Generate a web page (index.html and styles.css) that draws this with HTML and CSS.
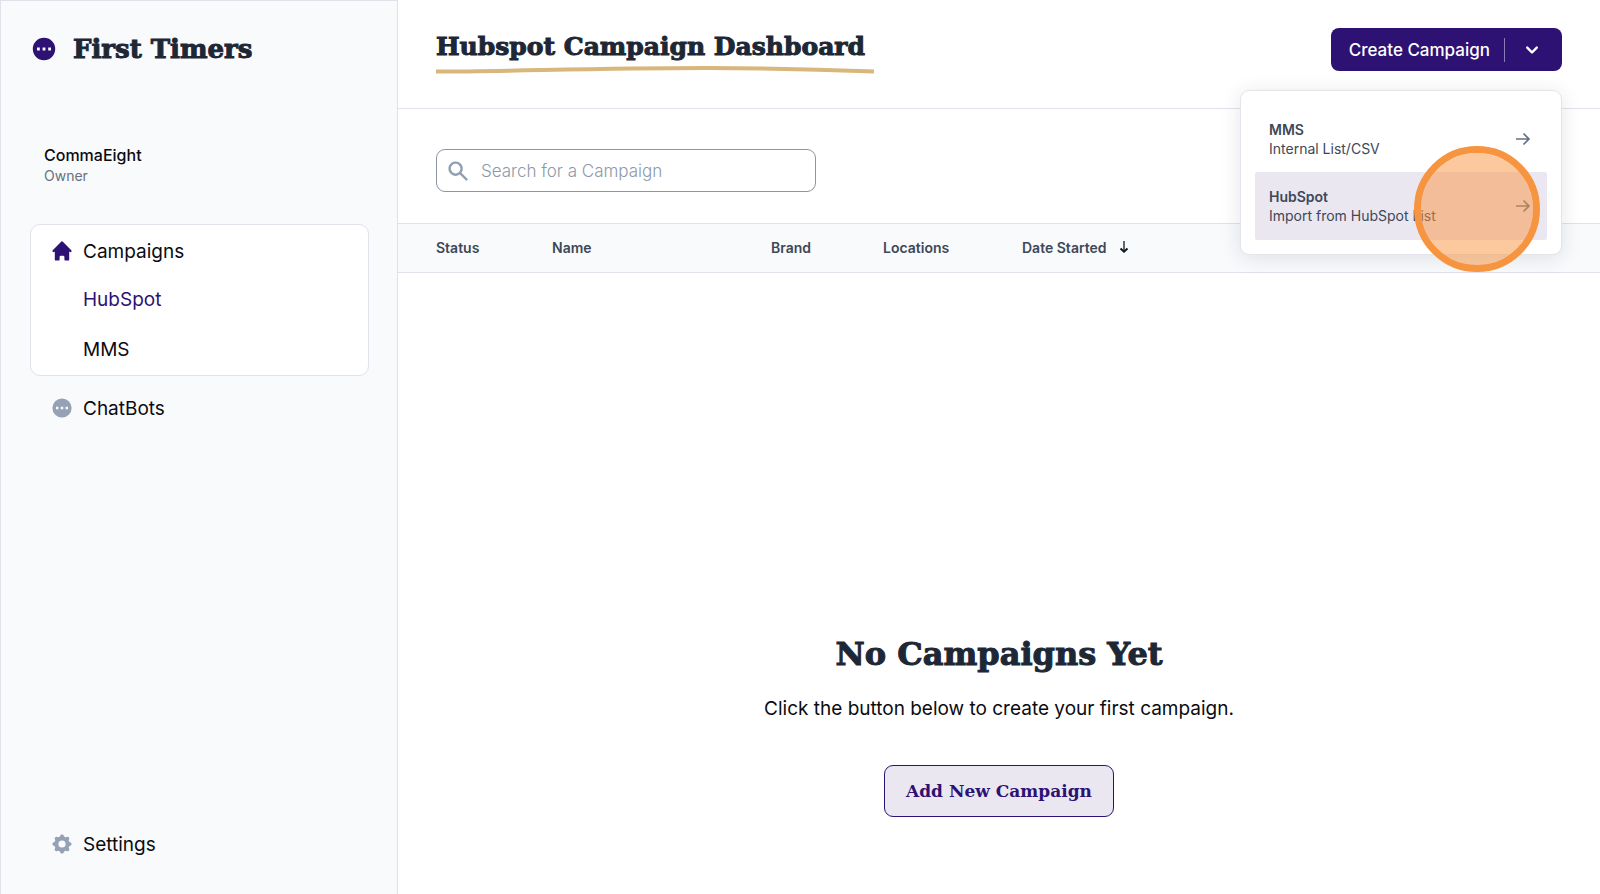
FILE: index.html
```html
<!DOCTYPE html>
<html lang="en">
<head>
<meta charset="utf-8">
<meta name="viewport" content="width=device-width, initial-scale=1">
<title>Hubspot Campaign Dashboard</title>
<link rel="stylesheet" href="styles.css">
</head>
<body>
<div class="app">
  <aside class="sidebar">
    <div class="brand">
      <svg class="brand-icon" viewBox="0 0 20 20" aria-hidden="true"><path fill-rule="evenodd" d="M18 10a8 8 0 11-16 0 8 8 0 0116 0zM7 9H5v2h2V9zm8 0h-2v2h2V9zM9 9h2v2H9V9z"/></svg>
      <span class="brand-name">First Timers</span>
    </div>
    <div class="account">
      <div class="account-name">CommaEight</div>
      <div class="account-role">Owner</div>
    </div>
    <nav class="nav">
      <div class="nav-group">
        <a class="nav-link" href="#campaigns"><svg class="nav-icon nav-icon-active" viewBox="0 0 20 20" aria-hidden="true"><path d="M10.707 2.293a1 1 0 00-1.414 0l-7 7a1 1 0 001.414 1.414L4 10.414V17a1 1 0 001 1h2a1 1 0 001-1v-2a1 1 0 011-1h2a1 1 0 011 1v2a1 1 0 001 1h2a1 1 0 001-1v-6.586l.293.293a1 1 0 001.414-1.414l-7-7z"/></svg>Campaigns</a>
        <a class="nav-link nav-sub nav-current" href="#hubspot">HubSpot</a>
        <a class="nav-link nav-sub" href="#mms">MMS</a>
      </div>
      <a class="nav-link nav-single" href="#chatbots"><svg class="nav-icon" viewBox="0 0 20 20" aria-hidden="true"><path fill-rule="evenodd" d="M18 10a8 8 0 11-16 0 8 8 0 0116 0zM7 9H5v2h2V9zm8 0h-2v2h2V9zM9 9h2v2H9V9z"/></svg>ChatBots</a>
      <a class="nav-link nav-single nav-settings" href="#settings"><svg class="nav-icon" viewBox="0 0 20 20" aria-hidden="true"><path fill-rule="evenodd" d="M11.49 3.17c-.38-1.56-2.6-1.56-2.98 0a1.532 1.532 0 01-2.286.948c-1.372-.836-2.942.734-2.106 2.106.54.886.061 2.042-.947 2.287-1.561.379-1.561 2.6 0 2.978a1.532 1.532 0 01.947 2.287c-.836 1.372.734 2.942 2.106 2.106a1.532 1.532 0 012.287.947c.379 1.561 2.6 1.561 2.978 0a1.533 1.533 0 012.287-.947c1.372.836 2.942-.734 2.106-2.106a1.533 1.533 0 01.947-2.287c1.561-.379 1.561-2.6 0-2.978a1.532 1.532 0 01-.947-2.287c.836-1.372-.734-2.942-2.106-2.106a1.532 1.532 0 01-2.287-.947zM10 13a3 3 0 100-6 3 3 0 000 6z"/></svg>Settings</a>
    </nav>
  </aside>

  <main class="main">
    <header class="header">
      <div class="title">
        <h1 class="title-text">Hubspot Campaign Dashboard</h1>
        <svg class="title-line" viewBox="0 0 438 8" preserveAspectRatio="none" aria-hidden="true"><path d="M0 5.500C80 5.500 150 2 270 2C340 2 390 3.500 438 5.500"/></svg>
      </div>
      <div class="create">
        <div class="split">
          <button class="split-main" type="button">Create Campaign</button>
          <button class="split-toggle" type="button" aria-label="Campaign types" aria-expanded="true"><svg class="chevron" viewBox="0 0 20 20" aria-hidden="true"><path fill-rule="evenodd" d="M5.293 7.293a1 1 0 011.414 0L10 10.586l3.293-3.293a1 1 0 111.414 1.414l-4 4a1 1 0 01-1.414 0l-4-4a1 1 0 010-1.414z"/></svg></button>
        </div>
        <div class="menu">
          <button class="menu-item" type="button">
            <span class="menu-copy"><span class="menu-title">MMS</span><span>Internal List/CSV</span></span>
            <svg class="arrow" viewBox="0 0 16 16" aria-hidden="true"><path d="M1 8h13M8.500 2.500L14 8l-5.500 5.500"/></svg>
          </button>
          <button class="menu-item menu-item-hover" type="button">
            <span class="menu-copy"><span class="menu-title">HubSpot</span><span>Import from HubSpot List</span></span>
            <svg class="arrow" viewBox="0 0 16 16" aria-hidden="true"><path d="M1 8h13M8.500 2.500L14 8l-5.500 5.500"/></svg>
            <span class="click-marker"></span>
          </button>
        </div>
      </div>
    </header>

    <div class="toolbar">
      <label class="search">
        <svg class="search-icon" viewBox="0 0 20 20" aria-hidden="true"><path fill-rule="evenodd" d="M8 4a4 4 0 100 8 4 4 0 000-8zM2 8a6 6 0 1110.890 3.476l4.817 4.817a1 1 0 01-1.414 1.414l-4.816-4.816A6 6 0 012 8z"/></svg>
        <input class="search-input" type="text" placeholder="Search for a Campaign" aria-label="Search for a Campaign">
      </label>
    </div>

    <table class="table">
      <thead>
        <tr>
          <th class="col-status">Status</th>
          <th class="col-name">Name</th>
          <th class="col-brand">Brand</th>
          <th class="col-locations">Locations</th>
          <th>
            <span class="sort">Date Started
              <svg class="sort-icon" viewBox="0 0 10 14" aria-hidden="true"><path class="sort-stem" d="M5 1v10"/><path class="sort-head" d="M1.500 8.500L5 11.700l3.500-3.200"/></svg>
            </span>
          </th>
        </tr>
      </thead>
    </table>

    <section class="empty">
      <h2 class="empty-title">No Campaigns Yet</h2>
      <p class="empty-text">Click the button below to create your first campaign.</p>
      <button class="add" type="button">Add New Campaign</button>
    </section>
  </main>
</div>
</body>
</html>
```

FILE: styles.css
```css
:root {
  --sans: Inter, "Liberation Sans", sans-serif;
  --display: "DejaVu Serif", serif;
  --purple: #2d1173;
  --ink: #1d2735;
  --slate: #3d4858;
  --line: #dfe3e9;
  --pale: #f8fafc;
}

* { box-sizing: border-box; }

body {
  margin: 0;
  font-family: var(--sans);
  color: #0b0b10;
  background: #fff;
}

button, input { font-family: inherit; }
button { cursor: pointer; }

.app {
  display: flex;
  min-height: 100vh;
}

/* Sidebar */
.sidebar {
  flex: none;
  display: flex;
  flex-direction: column;
  width: 398px;
  padding: 28px 28px 32px 29px;
  background: var(--pale);
  border: 1px solid var(--line);
  border-bottom: 0;
}

.brand {
  display: flex;
  align-items: center;
  gap: 15px;
  height: 40px;
}

.brand-icon {
  width: 28px;
  height: 28px;
  fill: var(--purple);
}

.brand-name {
  font: bold 26px/40px var(--display);
  color: var(--ink);
}

.brand-name, .title-text, .empty-title { -webkit-text-stroke: 1px var(--ink); }

.account { padding: 74px 14px 0; }

.account-name {
  font-size: 16px;
  font-weight: 500;
  line-height: 24px;
}

.account-role {
  font-size: 14px;
  line-height: 18px;
  color: #667180;
}

.nav {
  flex: 1;
  display: flex;
  flex-direction: column;
  margin-top: 39px;
}

.nav-group {
  display: flex;
  flex-direction: column;
  background: #fff;
  border: 1px solid var(--line);
  border-radius: 10px;
}

.nav-link {
  display: flex;
  align-items: center;
  gap: 9px;
  height: 52px;
  padding: 0 19px;
  font-size: 19px;
  color: #0b0b10;
  text-decoration: none;
}

.nav-sub {
  height: 44px;
  padding: 0 52px;
}

.nav-sub:last-child {
  height: 52px;
  margin-top: 2px;
}

.nav-current { color: var(--purple); }

.nav-single {
  padding: 0 20px;
  margin-top: 6px;
}

.nav-settings { margin-top: auto; margin-bottom: -8px; }

.nav-icon {
  width: 24px;
  height: 24px;
  fill: #95a2b5;
}

.nav-icon-active { fill: var(--purple); }

/* Header */
.main {
  flex: 1;
  display: flex;
  flex-direction: column;
  min-width: 0;
}

.header {
  display: flex;
  justify-content: space-between;
  align-items: flex-start;
  height: 109px;
  padding: 28px 38px 0;
  border-bottom: 1px solid var(--line);
}

.title-text {
  margin: 0;
  font: bold 25px/38px var(--display);
  color: var(--ink);
}

.title-line {
  display: block;
  width: 438px;
  height: 8px;
  fill: none;
  stroke: #d9b679;
  stroke-width: 4;
}

.create { position: relative; }

.split {
  display: flex;
  align-items: center;
  height: 43px;
  background: var(--purple);
  border-radius: 8px;
}

.split-main, .split-toggle {
  display: flex;
  align-items: center;
  justify-content: center;
  height: 24px;
  padding: 0;
  border: 0;
  background: none;
  color: #fff;
}

.split-main {
  padding: 0 14px 0 18px;
  font-size: 17px;
  font-weight: 500;
}

.split-toggle {
  width: 58px;
  padding-right: 4px;
  border-left: 1px solid #8b7bb3;
}

.chevron {
  width: 24px;
  height: 24px;
  fill: #fff;
}

.menu {
  position: absolute;
  top: 62px;
  right: 0;
  width: 322px;
  padding: 14px;
  background: #fff;
  border: 1px solid #e3e5ea;
  border-radius: 9px;
  box-shadow: 0 3px 20px rgba(30, 40, 60, 0.12);
}

.menu-item {
  position: relative;
  display: flex;
  align-items: center;
  justify-content: space-between;
  width: 100%;
  height: 67px;
  padding: 0 16px 0 14px;
  border: 0;
  border-radius: 2px;
  background: none;
  font-size: 14px;
  line-height: 19px;
  text-align: left;
  color: var(--slate);
}

.menu-item-hover {
  height: 68px;
  background: #eae7f1;
}

.menu-copy {
  display: flex;
  flex-direction: column;
}

.menu-title { font-weight: 600; }

.arrow {
  width: 16px;
  height: 16px;
  fill: none;
  stroke: #667085;
  stroke-width: 1.700;
}

.click-marker {
  position: absolute;
  top: -26px;
  right: 7px;
  width: 126px;
  height: 126px;
  border: 7px solid #f79440;
  border-radius: 50%;
  background: rgba(249, 148, 64, 0.5);
  background-clip: padding-box;
}

/* Search */
.toolbar { padding: 40px 38px 31px; }

.search {
  display: flex;
  align-items: center;
  gap: 11px;
  width: 380px;
  height: 43px;
  padding: 0 9px;
  border: 1px solid #8b95a3;
  border-radius: 9px;
}

.search-icon {
  width: 24px;
  height: 24px;
  fill: #93a0b0;
}

.search-input {
  flex: 1;
  min-width: 0;
  padding: 0;
  border: 0;
  outline: 0;
  background: none;
  font-size: 17px;
  font-weight: 300;
}

.search-input::placeholder { color: #8d99a9; opacity: 1; }

/* Table */
.table {
  width: 100%;
  table-layout: fixed;
  border-spacing: 0;
  background: var(--pale);
  border-top: 1px solid var(--line);
  border-bottom: 1px solid var(--line);
}

.table th {
  height: 48px;
  padding: 0 0 2px;
  font-size: 14px;
  font-weight: 600;
  text-align: left;
  color: var(--slate);
}

.table .col-status { width: 154px; padding-left: 38px; }
.col-name { width: 219px; }
.col-brand { width: 112px; }
.col-locations { width: 139px; }

.sort {
  display: flex;
  align-items: center;
  gap: 12px;
}

.sort-icon {
  width: 10px;
  height: 14px;
  fill: none;
  stroke: #111820;
}

.sort-stem { stroke-width: 1.300; }
.sort-head { stroke-width: 2; }

/* Empty state */
.empty {
  flex: 1;
  display: flex;
  flex-direction: column;
  align-items: center;
  justify-content: flex-end;
  padding: 40px 38px 77px;
}

.empty-title {
  margin: 0;
  font: bold 32px/48px var(--display);
  color: var(--ink);
}

.empty-text {
  margin: 17px 0 42px;
  font-size: 19px;
  line-height: 28px;
}

.add {
  height: 52px;
  padding: 0 21px;
  border: 1px solid var(--purple);
  border-radius: 9px;
  background: #eae7f1;
  font: bold 17px var(--display);
  color: var(--purple);
}
```
